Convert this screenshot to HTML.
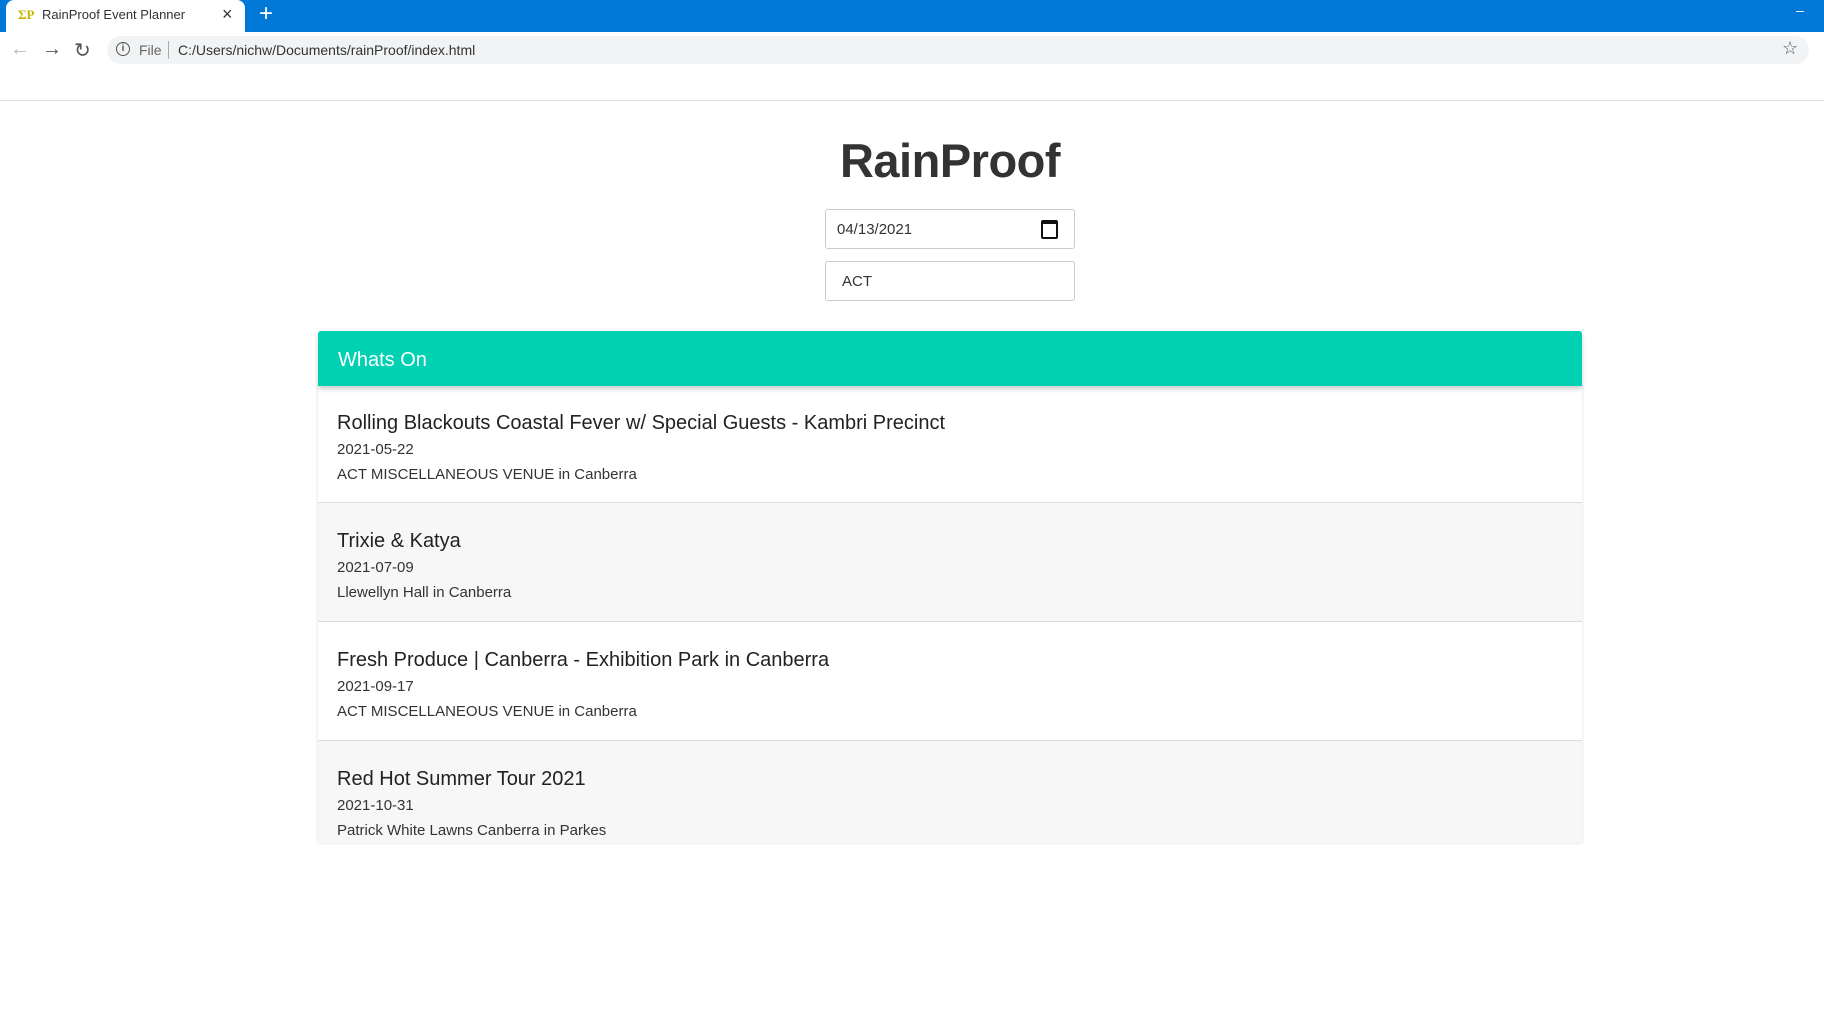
<!DOCTYPE html><html><head><style>
body{margin:0;width:1824px;height:1024px;overflow:hidden;background:#fff;font-family:"Liberation Sans",sans-serif;position:relative}
.a{position:absolute}
</style></head><body>
<div class="a" style="left:0;top:0;width:1824px;height:32px;background:#0078d7"></div>
<div class="a" style="left:6px;top:0;width:239px;height:34px;background:#fff;border-radius:8px 8px 0 0"></div>
<div class="a" style="left:18px;top:7px;font:bold 13px 'Liberation Serif',serif;color:#c9b400">ΣP</div>
<div class="a" style="left:42px;top:7px;font-size:13px;color:#333">RainProof Event Planner</div>
<div class="a" style="left:222px;top:4px;font-size:18px;color:#333">×</div>
<div class="a" style="left:259px;top:0px;font-size:24px;color:#fff">+</div>
<div class="a" style="left:1796px;top:2px;font-size:14px;color:#fff">–</div>
<div class="a" style="left:10px;top:38px;font-size:20px;color:#bbb">←</div>
<div class="a" style="left:42px;top:38px;font-size:20px;color:#555">→</div>
<div class="a" style="left:74px;top:38px;font-size:20px;color:#555">↻</div>
<div class="a" style="left:107px;top:36px;width:1702px;height:28px;background:#f1f3f4;border-radius:14px"></div>
<div class="a" style="left:116px;top:42px;width:12px;height:12px;border:1.5px solid #555;border-radius:50%;font:bold 10px sans-serif;text-align:center;line-height:12px;color:#555">i</div>
<div class="a" style="left:139px;top:42px;font-size:14px;color:#666">File</div>
<div class="a" style="left:168px;top:41px;width:1px;height:18px;background:#aaa"></div>
<div class="a" style="left:178px;top:42px;font-size:14px;color:#333">C:/Users/nichw/Documents/rainProof/index.html</div>
<div class="a" style="left:1782px;top:38px;font-size:18px;color:#555">☆</div>
<div class="a" style="left:0;top:100px;width:1824px;height:1px;background:#ddd"></div>
<div class="a" style="left:0;top:133px;width:1900px;text-align:center;font-size:47px;font-weight:bold;color:#333;letter-spacing:-0.5px">RainProof</div>
<div class="a" style="left:825px;top:209px;width:248px;height:38px;border:1px solid #ccc;border-radius:3px"></div>
<div class="a" style="left:837px;top:221px;font-size:15px;color:#333">04/13/2021</div>
<div class="a" style="left:1041px;top:220px;width:13px;height:13px;border:2px solid #111;border-top-width:4px;border-radius:2px"></div>
<div class="a" style="left:825px;top:261px;width:248px;height:38px;border:1px solid #ccc;border-radius:3px"></div>
<div class="a" style="left:842px;top:273px;font-size:15px;color:#333">ACT</div>
<div class="a" style="left:318px;top:385px;width:1264px;height:458px;background:#fff;box-shadow:0 0 3px rgba(0,0,0,.15);overflow:hidden">
 <div style="height:118px;border-bottom:1px solid #ddd;background:#fff;padding:19px 0 0 19px;box-sizing:border-box"><div style="font-size:20px;color:#222;margin-top:8px">Rolling Blackouts Coastal Fever w/ Special Guests - Kambri Precinct</div><div style="font-size:15px;color:#333;margin-top:6px">2021-05-22</div><div style="font-size:15px;color:#333;margin-top:8px">ACT MISCELLANEOUS VENUE in Canberra</div></div>
 <div style="height:119px;border-bottom:1px solid #ddd;background:#f7f7f7;padding:19px 0 0 19px;box-sizing:border-box"><div style="font-size:20px;color:#222;margin-top:8px">Trixie &amp; Katya</div><div style="font-size:15px;color:#333;margin-top:6px">2021-07-09</div><div style="font-size:15px;color:#333;margin-top:8px">Llewellyn Hall in Canberra</div></div>
 <div style="height:119px;border-bottom:1px solid #ddd;background:#fff;padding:19px 0 0 19px;box-sizing:border-box"><div style="font-size:20px;color:#222;margin-top:8px">Fresh Produce | Canberra - Exhibition Park in Canberra</div><div style="font-size:15px;color:#333;margin-top:6px">2021-09-17</div><div style="font-size:15px;color:#333;margin-top:8px">ACT MISCELLANEOUS VENUE in Canberra</div></div>
 <div style="height:118px;background:#f7f7f7;padding:19px 0 0 19px;box-sizing:border-box"><div style="font-size:20px;color:#222;margin-top:8px">Red Hot Summer Tour 2021</div><div style="font-size:15px;color:#333;margin-top:6px">2021-10-31</div><div style="font-size:15px;color:#333;margin-top:8px">Patrick White Lawns Canberra in Parkes</div></div>
</div>
<div class="a" style="left:318px;top:331px;width:1264px;height:55px;background:#00d1b2;border-radius:3px 3px 0 0;box-shadow:0 3px 5px rgba(0,0,0,.2)"><div style="color:#fff;font-size:20px;padding:18px 0 0 20px">Whats On</div></div>
</body></html>
